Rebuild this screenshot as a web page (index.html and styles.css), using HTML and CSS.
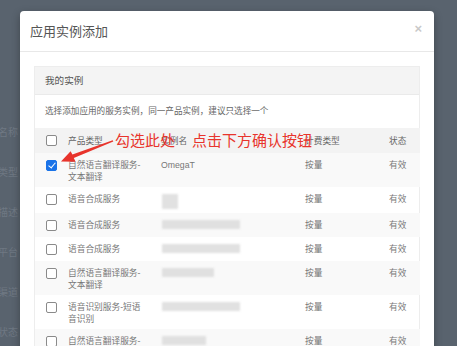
FILE: index.html
```html
<!DOCTYPE html>
<html lang="zh-CN">
<head>
  <meta charset="UTF-8">
  <title>应用实例添加</title>
  <link rel="stylesheet" href="styles.css">
</head>
<body>

<!-- page behind the backdrop -->
<div class="page-behind">
  <p>应用名称</p>
  <p>应用类型</p>
  <p>应用描述</p>
  <p>应用平台</p>
  <p>应用渠道</p>
  <p>应用状态</p>
</div>

<!-- modal -->
<div class="modal">
  <div class="modal-header">
    <h4 class="modal-title">应用实例添加</h4>
    <span class="close">×</span>
  </div>
  <div class="modal-body">
    <div class="panel">
      <div class="panel-heading">我的实例</div>
      <div class="panel-desc">选择添加应用的服务实例，同一产品实例，建议只选择一个</div>
      <table class="inst-table">
        <colgroup>
          <col class="w-check"><col class="w-type"><col class="w-name"><col class="w-bill"><col class="w-state">
        </colgroup>
        <thead>
          <tr><th class="cell-check"><span class="cb"></span></th><th>产品类型</th><th>实例名</th><th>计费类型</th><th>状态</th></tr>
        </thead>
        <tbody>
          <tr>
            <td class="cell-check"><span class="cb checked"></span></td>
            <td>自然语言翻译服务-<br>文本翻译</td>
            <td>OmegaT</td><td>按量</td><td>有效</td>
          </tr>
          <tr>
            <td class="cell-check"><span class="cb"></span></td>
            <td>语音合成服务</td>
            <td><span class="blur b-tiny"></span></td><td>按量</td><td>有效</td>
          </tr>
          <tr>
            <td class="cell-check"><span class="cb"></span></td>
            <td>语音合成服务</td>
            <td><span class="blur b-long"></span></td><td>按量</td><td>有效</td>
          </tr>
          <tr>
            <td class="cell-check"><span class="cb"></span></td>
            <td>语音合成服务</td>
            <td><span class="blur b-long"></span></td><td>按量</td><td>有效</td>
          </tr>
          <tr>
            <td class="cell-check"><span class="cb"></span></td>
            <td>自然语言翻译服务-<br>文本翻译</td>
            <td><span class="blur b-mid"></span></td><td>按量</td><td>有效</td>
          </tr>
          <tr>
            <td class="cell-check"><span class="cb"></span></td>
            <td>语音识别服务-短语<br>音识别</td>
            <td><span class="blur b-long"></span></td><td>按量</td><td>有效</td>
          </tr>
          <tr>
            <td class="cell-check"><span class="cb"></span></td>
            <td>自然语言翻译服务-<br>文本翻译</td>
            <td><span class="blur b-short"></span></td><td>按量</td><td>有效</td>
          </tr>
        </tbody>
      </table>
    </div>
  </div>
</div>

<!-- red hint drawn over the screenshot -->
<div class="hint">
  <svg class="hint-arrow" width="457" height="346" viewBox="0 0 457 346">
    <polygon fill="#e8342c" points="113.3,141.6 112.7,140.2 72.4,154.6 70.6,151.2 61,161.5 75.6,161.8 73.8,158.0"/>
  </svg>
  <div class="hint-text"><span>勾选此处</span><span>点击下方确认按钮</span></div>
</div>

</body>
</html>
```

FILE: styles.css
```css
/* base */
html, body {
  margin: 0;
  padding: 0;
  height: 100%;
}
body {
  background: #59636e;
  font-family: "Liberation Sans", "Noto Sans CJK SC", sans-serif;
  overflow: hidden;
  position: relative;
}

/* page behind backdrop */
.page-behind {
  padding-top: 126px;
  margin-left: -22px;
}
.page-behind p {
  margin: 0;
  height: 40px;
  font-size: 10px;
  line-height: 14px;
  color: #6f7883;
}

/* modal */
.modal {
  position: absolute;
  left: 20px;
  top: 11px;
  width: 414px;
  height: 360px;
  background: #fff;
  border-radius: 4px;
  box-shadow: 0 3px 9px rgba(0,0,0,0.3);
  overflow: hidden;
}
.modal-header {
  height: 40px;
  border-bottom: 1px solid #e8e8e8;
  display: flex;
  align-items: center;
  justify-content: space-between;
  padding: 0 12px 0 10px;
}
.modal-title {
  margin: 0;
  font-size: 13px;
  font-weight: normal;
  color: #555;
  line-height: 18px;
  padding-top: 1px;
}
.close {
  font-size: 13px;
  font-weight: bold;
  color: #c9c9c9;
  line-height: 12px;
  margin-top: -4px;
}
.modal-body {
  padding: 14px 14px 0;
}

/* panel */
.panel {
  border: 1px solid #ededed;
  border-bottom: none;
}
.panel-heading {
  height: 27px;
  line-height: 27px;
  padding-left: 10px;
  background: #f4f4f4;
  border-bottom: 1px solid #eaeaea;
  font-size: 9.6px;
  color: #555;
}
.panel-desc {
  padding: 9px 10px 10px;
  font-size: 8.6px;
  line-height: 14px;
  color: #666;
}

/* table */
.inst-table {
  width: 100%;
  border-collapse: collapse;
  table-layout: fixed;
  font-size: 8.7px;
  color: #777;
}
.w-check { width: 26px; }
.w-type  { width: 93px; }
.w-name  { width: 144px; }
.w-bill  { width: 84px; }
.w-state { width: 38px; }
.inst-table th,
.inst-table td {
  padding: 6px 7px 4px;
  line-height: 12px;
  text-align: left;
  vertical-align: top;
  font-weight: normal;
  white-space: nowrap;
}
.inst-table thead tr { background: #f3f3f3; }
.inst-table th { color: #666; padding-top: 7px; padding-bottom: 6px; }
.inst-table tbody tr:nth-child(odd) { background: #f9f9f9; }
.inst-table .cell-check { padding: 5px 0 4px 11px; }

/* checkbox */
.cb {
  display: block;
  width: 9px;
  height: 9px;
  margin: 2px 0 2px;
  border: 1px solid #8a8a8a;
  border-radius: 2px;
  background: #fff;
  position: relative;
}
.cb.checked {
  background: #1a73e8;
  border-color: #1a73e8;
}
.cb.checked::after {
  content: "";
  position: absolute;
  left: 2.5px;
  top: 0px;
  width: 3px;
  height: 6px;
  border: solid #fff;
  border-width: 0 1.6px 1.6px 0;
  transform: rotate(40deg);
}

/* blurred instance names */
.blur {
  display: block;
  height: 9px;
  margin: 1px 0 0 1px;
  background: #dadada;
  filter: blur(1.2px);
  opacity: 0.8;
}
.b-tiny  { width: 16px; height: 15px; }
.b-long  { width: 78px; }
.b-mid   { width: 52px; }
.b-short { width: 44px; }

/* red hint */
.hint {
  position: absolute;
  left: 0;
  top: 0;
  width: 457px;
  height: 346px;
  pointer-events: none;
}
.hint-arrow {
  display: block;
}
.hint-text {
  position: absolute;
  left: 115px;
  top: 132px;
  display: flex;
  gap: 17px;
  font-size: 15px;
  line-height: 18px;
  color: #e8342c;
  white-space: nowrap;
}
```
